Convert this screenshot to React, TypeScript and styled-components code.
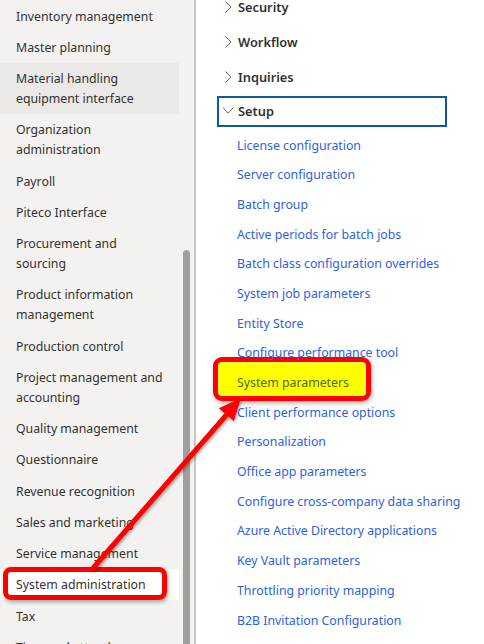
import React from "react";
import styled, { createGlobalStyle } from "styled-components";

const GlobalStyle = createGlobalStyle`
  html, body {
    margin: 0;
    padding: 0;
    background: #ffffff;
  }
  body {
    font-family: "Segoe UI", "Noto Sans", "Liberation Sans", sans-serif;
    -webkit-font-smoothing: antialiased;
  }
`;

//data
const modules: string[] = [
  "Inventory management",
  "Master planning",
  "Material handling equipment interface",
  "Organization administration",
  "Payroll",
  "Piteco Interface",
  "Procurement and sourcing",
  "Product information management",
  "Production control",
  "Project management and accounting",
  "Quality management",
  "Questionnaire",
  "Revenue recognition",
  "Sales and marketing",
  "Service management",
  "System administration",
  "Tax",
  "Time and attendance",
];

const groups: string[] = ["Security", "Workflow", "Inquiries"];

const setupLinks: string[] = [
  "License configuration",
  "Server configuration",
  "Batch group",
  "Active periods for batch jobs",
  "Batch class configuration overrides",
  "System job parameters",
  "Entity Store",
  "Configure performance tool",
  "System parameters",
  "Client performance options",
  "Personalization",
  "Office app parameters",
  "Configure cross-company data sharing",
  "Azure Active Directory applications",
  "Key Vault parameters",
  "Throttling priority mapping",
  "B2B Invitation Configuration",
];

const Page = styled.div`
  position: relative;
  display: flex;
  width: 484px;
  height: 644px;
  overflow: hidden;
  font-size: 12.3px;
  color: #323130;
`;

const NavPane = styled.nav`
  flex: none;
  display: flex;
  width: 194px;
  height: 100%;
  background: #f3f2f1;
  border-right: 2px solid #c8c6c4;
`;

const NavList = styled.ul`
  list-style: none;
  margin: 0;
  padding: 0.4px 0 0;
  width: 179px;
  flex: none;
`;

const NavItem = styled.li<{ $tone?: "hover" | "current"; $marked?: boolean }>`
  position: relative;
  padding: 6.4px 10px 4.85px 16px;
  line-height: 20px;
  background: ${({ $tone }) =>
    $tone === "hover" ? "#ebe9e7" : $tone === "current" ? "#ffffff" : "transparent"};

  ${({ $marked }) =>
    $marked &&
    `
    &::after {
      content: "";
      position: absolute;
      left: 2.7px;
      top: -2.3px;
      width: 164px;
      height: 33.3px;
      box-sizing: border-box;
      border: 5px solid #ff0000;
      border-radius: 8px;
      box-shadow: 1px 2px 4px rgba(0, 0, 0, 0.35);
    }
  `}
`;

const ScrollTrack = styled.div`
  flex: 1;
  display: flex;
  justify-content: center;
  padding-top: 250px;
`;

const ScrollThumb = styled.div`
  width: 7px;
  background: #a19f9d;
  border-radius: 4px 4px 0 0;
`;

const ContentPane = styled.main`
  flex: 1;
  background: #ffffff;
  padding-left: 21px;
`;

const Tree = styled.div`
  display: flex;
  flex-direction: column;
  gap: 3.6px;
  margin-top: -8.2px;
  width: 230px;
`;

const GroupHeader = styled.div<{ $open?: boolean }>`
  display: flex;
  align-items: center;
  box-sizing: border-box;
  height: 31px;
  padding-left: 4px;
  border: 2px solid ${({ $open }) => ($open ? "#0f5a96" : "transparent")};
  font-size: 12.8px;
  font-weight: 600;
  color: #323130;
  white-space: nowrap;
`;

const Chevron = styled.svg`
  flex: none;
  width: 15px;
  height: 12px;
  fill: none;
  stroke: #605e5c;
  stroke-width: 1;
`;

const LinkList = styled.div`
  display: flex;
  flex-direction: column;
`;

const LinkRow = styled.div<{ $marked?: boolean }>`
  position: relative;
  display: flex;
  align-items: center;
  height: 29.69px;
  padding-left: 20px;
  white-space: nowrap;
  color: ${({ $marked }) => ($marked ? "#4d6b0e" : "#2c62e0")};

  ${({ $marked }) =>
    $marked &&
    `
    &::before {
      content: "";
      position: absolute;
      left: -4.3px;
      top: -10.4px;
      width: 158px;
      height: 43.7px;
      box-sizing: border-box;
      background: #ffff00;
      border: 5.5px solid #ff0000;
      border-radius: 9px;
      box-shadow: 1px 2px 4px rgba(0, 0, 0, 0.35), inset 0 0 3px rgba(255, 255, 160, 0.9);
    }
  `}
`;

const LinkLabel = styled.span`
  position: relative;
  z-index: 1;
`;

const ArrowLayer = styled.svg`
  position: absolute;
  left: 0;
  top: 0;
  width: 484px;
  height: 644px;
  pointer-events: none;
  overflow: visible;
`;

const ChevronRight = () => (
  <Chevron viewBox="0 0 15 12">
    <polyline points="2.5,0.5 8,6 2.5,11.5" />
  </Chevron>
);

const ChevronDown = () => (
  <Chevron viewBox="0 0 15 12">
    <polyline points="0,2.5 5.2,8.2 10.4,2.5" />
  </Chevron>
);

const App: React.FC = () => {
  return (
    <>
      <GlobalStyle />
      <Page>
        <NavPane>
          <NavList>
            {modules.map((name) => (
              <NavItem
                key={name}
                $tone={
                  name === "Material handling equipment interface"
                    ? "hover"
                    : name === "System administration"
                    ? "current"
                    : undefined
                }
                $marked={name === "System administration"}
              >
                {name}
              </NavItem>
            ))}
          </NavList>
          <ScrollTrack>
            <ScrollThumb />
          </ScrollTrack>
        </NavPane>

        <ContentPane>
          <Tree>
            {groups.map((g) => (
              <GroupHeader key={g}>
                <ChevronRight />
                {g}
              </GroupHeader>
            ))}
            <GroupHeader $open>
              <ChevronDown />
              Setup
            </GroupHeader>
            <LinkList>
              {setupLinks.map((l) => (
                <LinkRow key={l} $marked={l === "System parameters"}>
                  <LinkLabel>{l}</LinkLabel>
                </LinkRow>
              ))}
            </LinkList>
          </Tree>
        </ContentPane>

        {/* annotation arrow */}
        <ArrowLayer viewBox="0 0 484 644">
          <defs>
            <filter id="arrowShadow" x="-20%" y="-20%" width="140%" height="140%">
              <feDropShadow dx="1" dy="2" stdDeviation="1.5" floodColor="#000" floodOpacity="0.35" />
            </filter>
          </defs>
          <g filter="url(#arrowShadow)">
            <line x1="94" y1="567" x2="229" y2="412" stroke="#ff0000" strokeWidth="5" strokeLinecap="round" />
            <polygon points="241,398 233.8,421 218.8,408.2" fill="#ff0000" />
          </g>
        </ArrowLayer>
      </Page>
    </>
  );
};

export default App;
